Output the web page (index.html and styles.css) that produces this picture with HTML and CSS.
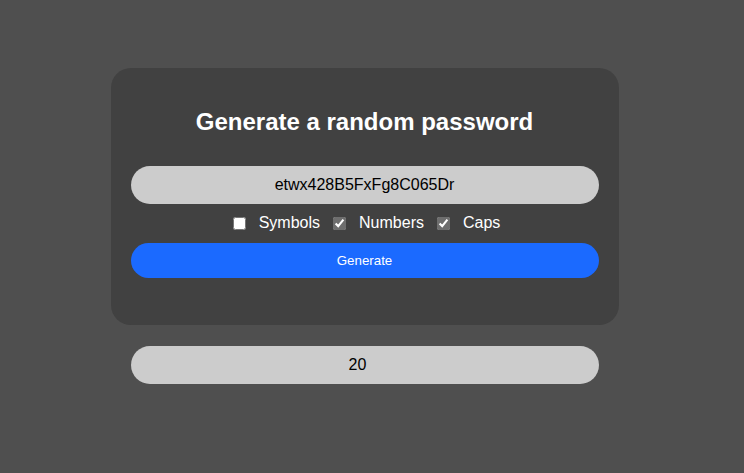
FILE: index.html
```html
<!DOCTYPE html>
<html lang="en">
<head>
<meta charset="utf-8">
<title>Password generator</title>
<link rel="stylesheet" href="styles.css">
</head>
<body>
<div class="page">
  <div class="card">
    <h2 class="title">Generate a random password</h2>
    <input class="field" type="text" value="etwx428B5FxFg8C065Dr" readonly>
    <div class="options">
      <label class="option"><input type="checkbox" class="check"><span>Symbols</span></label>
      <label class="option"><input type="checkbox" class="check" checked><span>Numbers</span></label>
      <label class="option"><input type="checkbox" class="check" checked><span>Caps</span></label>
    </div>
    <button class="generate" type="button">Generate</button>
  </div>
  <input class="field length" type="text" value="20">
</div>
</body>
</html>
```

FILE: styles.css
```css
html, body {
  margin: 0;
  background: #4f4f4f;
  font-family: "Liberation Sans", Arial, sans-serif;
}

.page {
  width: 729px;
  display: flex;
  flex-direction: column;
  align-items: center;
  padding-top: 68px;
}

.card {
  width: 508px;
  box-sizing: border-box;
  padding: 0 20px 47px;
  background: #414141;
  border-radius: 20px;
  display: flex;
  flex-direction: column;
}

.title {
  margin: 40px 0 0;
  font-size: 24px;
  line-height: 28px;
  font-weight: bold;
  text-align: center;
  color: #ffffff;
}

.field {
  display: block;
  box-sizing: border-box;
  width: 468px;
  height: 38px;
  margin: 30px 0 0;
  padding: 0 16px;
  border: none;
  outline: none;
  border-radius: 19px;
  background: #cccccc;
  color: #000000;
  font-family: "Liberation Sans", Arial, sans-serif;
  font-size: 16px;
  text-align: center;
}

.options {
  display: flex;
  justify-content: center;
  align-items: center;
  gap: 13px;
  height: 20px;
  margin: 9px 0 0 4px;
  color: #ffffff;
  font-size: 16px;
}

.option {
  display: flex;
  align-items: center;
  gap: 13px;
}

.check {
  width: 13px;
  height: 13px;
  margin: 1px 0 0;
  accent-color: #6e6e6e;
}

.generate {
  height: 35px;
  margin: 10px 0 0;
  border: none;
  border-radius: 18px;
  background: #1b6aff;
  color: #ffffff;
  font-family: "Liberation Sans", Arial, sans-serif;
  font-size: 13.33px;
}

.length {
  margin-top: 21px;
  padding: 0 30px 0 16px;
}
```
